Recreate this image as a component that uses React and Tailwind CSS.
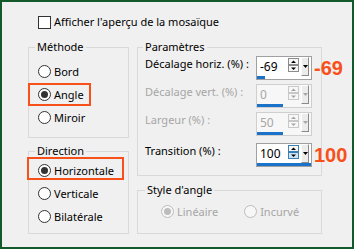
import React from "react";

const Radio = ({ checked, disabled }) => (
  <span
    className={`w-[13px] h-[13px] rounded-full border flex items-center justify-center shrink-0 ${
      disabled ? "border-[#bcbcbc] bg-[#f7f7f7]" : "border-[#333333] bg-white"
    }`}
  >
    {checked && (
      <span
        className={`w-[7px] h-[7px] rounded-full ${disabled ? "bg-[#bcbcbc]" : "bg-[#333333]"}`}
      ></span>
    )}
  </span>
);

const Option = ({ label, checked, disabled, children }) => (
  <div className="relative flex items-center h-[23px] gap-[3px]">
    <Radio checked={checked} disabled={disabled} />
    <span className={`whitespace-nowrap ${disabled ? "text-[#a6a6a6]" : "text-black"}`}>{label}</span>
    {children}
  </div>
);

const UpDown = ({ disabled, focus }) => {
  const stroke = disabled ? "#c8c8c8" : focus ? "#3c7fb1" : "#8c8c8c";
  const tri = disabled ? "#a6a6a6" : "#000000";
  return (
    <svg width="11" height="15" viewBox="0 0 11 15" className="mt-[1px] shrink-0">
      <rect x="0.5" y="0.5" width="10" height="6" fill="#f7f7f7" stroke={stroke} />
      <rect x="0.5" y="7.5" width="10" height="6" fill={focus ? "#cce4f7" : "#f7f7f7"} stroke={stroke} />
      <path d="M3 5 L8 5 L5.5 2.5 Z" fill={tri} />
      <path d="M3 9.5 L8 9.5 L5.5 12 Z" fill={tri} />
    </svg>
  );
};

const Spinner = ({ value, bar, disabled, focus, note }) => (
  <div
    className={`relative w-[56px] h-[24px] border flex flex-col shrink-0 ${
      disabled ? "border-[#cfcfcf] bg-[#f7f7f7]" : "border-[#a0a0a0] bg-white"
    }`}
  >
    <div className="flex h-[19px]">
      <span className={`flex-1 pl-[3px] leading-[19px] text-[12px] ${disabled ? "text-[#a6a6a6]" : "text-black"}`}>
        {value}
      </span>
      <UpDown disabled={disabled} focus={focus} />
      <div className="ml-[2px] mr-[2px] w-[8px] h-[19px] bg-[#ececec] border border-t-white border-l-white border-r-[#8a8a8a] border-b-[#8a8a8a] flex justify-center pt-[7px]">
        <svg width="5" height="3" viewBox="0 0 5 3">
          <path d="M0 0 L5 0 L2.5 3 Z" fill={disabled ? "#a6a6a6" : "#000000"} />
        </svg>
      </div>
    </div>
    <div className="h-[3px]">
      <div className={`h-full bg-[#1a73c9] ${bar}`}></div>
    </div>
    {note && (
      <span className="absolute left-[57px] top-[-1px] text-[20px] leading-[24px] font-bold text-[#f8501b] font-['Liberation_Sans',Arial,sans-serif]">
        {note}
      </span>
    )}
  </div>
);

const Field = ({ label, disabled, children, className = "" }) => (
  <div className={`flex items-start justify-between ${className}`}>
    <span className={`leading-[16px] whitespace-nowrap ${disabled ? "text-[#a6a6a6]" : "text-black"}`}>{label}</span>
    {children}
  </div>
);

export default function App() {
  return (
    <div className="w-[354px] h-[249px] border-2 border-[#125a2b] bg-[#f0f0f0] pt-[12px] text-[11px] leading-[16px] text-black font-['Noto_Sans',sans-serif] overflow-hidden">
      <div className="flex items-center h-[16px] pl-[36px] gap-[3px]">
        <span className="w-[13px] h-[13px] border border-[#333333] bg-white"></span>
        <span>Afficher l'aperçu de la mosaïque</span>
      </div>

      <div className="flex mt-[9px] ml-[26px] gap-[8px]">
        <div className="w-[101px] flex flex-col">
          <fieldset className="border border-[#d9d9d9] p-0 m-0">
            <legend className="ml-[6px] px-[2px] leading-[16px]">Méthode</legend>
            <div className="pl-[9px] pt-[5px] pb-[8px]">
              <Option label="Bord" />
              <Option label="Angle" checked>
                <span className="absolute left-[-10px] top-0 w-[63px] h-[23px] border-2 border-[#f8501b]"></span>
              </Option>
              <Option label="Miroir" />
            </div>
          </fieldset>

          <fieldset className="border border-[#d9d9d9] p-0 m-0 mt-[5px]">
            <legend className="ml-[6px] px-[2px] leading-[16px]">Direction</legend>
            <div className="pl-[9px] pb-[5px]">
              <Option label="Horizontale" checked>
                <span className="absolute left-[-11px] top-[-2px] w-[97px] h-[23px] border-2 border-[#f8501b]"></span>
              </Option>
              <Option label="Verticale" />
              <Option label="Bilatérale" />
            </div>
          </fieldset>
        </div>

        <div className="w-[185px] flex flex-col">
          <fieldset className="border border-[#d9d9d9] p-0 m-0">
            <legend className="ml-[5px] px-[2px] leading-[16px]">Paramètres</legend>
            <div className="pl-[7px] pr-[9px] pt-[1px] pb-[8px] flex flex-col">
              <Field label="Décalage horiz. (%) :">
                <Spinner value="-69" bar="w-[8px]" note="-69" />
              </Field>
              <Field label="Décalage vert. (%) :" disabled className="mt-[4px]">
                <Spinner value="0" bar="w-[26px]" disabled />
              </Field>
              <Field label="Largeur (%) :" disabled className="mt-[4px]">
                <Spinner value="50" bar="w-[26px]" disabled />
              </Field>
              <Field label="Transition (%) :" className="mt-[7px]">
                <Spinner value="100" bar="w-full" focus note="100" />
              </Field>
            </div>
          </fieldset>

          <fieldset className="border border-[#d9d9d9] p-0 m-0 mt-[6px]">
            <legend className="ml-[7px] px-[2px] leading-[16px]">Style d'angle</legend>
            <div className="flex pl-[23px] pt-[2px] pb-[10px] gap-[26px]">
              <Option label="Linéaire" checked disabled />
              <Option label="Incurvé" disabled />
            </div>
          </fieldset>
        </div>
      </div>
    </div>
  );
}
